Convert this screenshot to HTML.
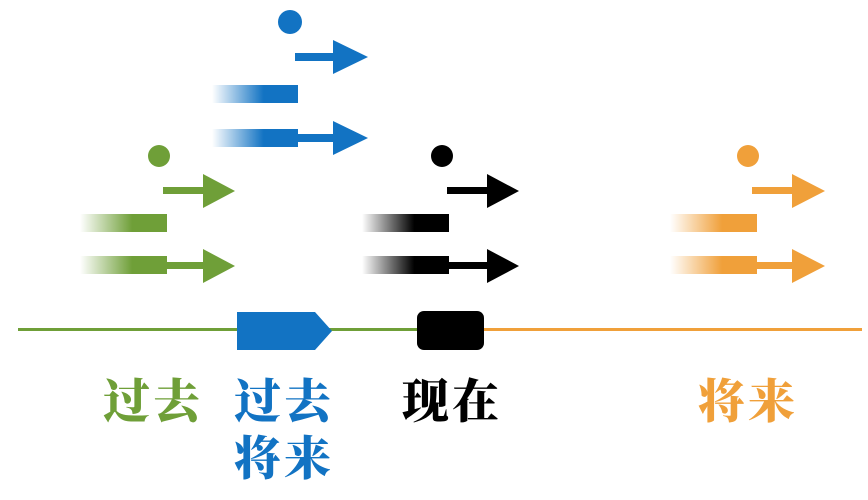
<!DOCTYPE html>
<html><head><meta charset="utf-8"><style>
html,body{margin:0;padding:0;background:#fff;width:868px;height:500px;overflow:hidden;position:relative}
.t{position:absolute;font-family:"Liberation Serif","Noto Serif CJK SC",serif;font-weight:900;font-size:47px;line-height:50px;letter-spacing:3px;white-space:nowrap}
</style></head><body>
<svg width="868" height="500" style="position:absolute;left:0;top:0">
<defs>
<linearGradient id="gb" x1="0" x2="1"><stop offset="0" stop-color="#1273c3" stop-opacity="0"/><stop offset="0.6" stop-color="#1273c3"/></linearGradient>
<linearGradient id="gg" x1="0" x2="1"><stop offset="0" stop-color="#6f9f38" stop-opacity="0"/><stop offset="0.6" stop-color="#6f9f38"/></linearGradient>
<linearGradient id="gk" x1="0" x2="1"><stop offset="0" stop-color="#000" stop-opacity="0"/><stop offset="0.6" stop-color="#000"/></linearGradient>
<linearGradient id="go" x1="0" x2="1"><stop offset="0" stop-color="#f0a03a" stop-opacity="0"/><stop offset="0.6" stop-color="#f0a03a"/></linearGradient>
</defs>
<g fill="#1273c3">
<circle cx="290" cy="22" r="12"/>
<rect x="295" y="53" width="40" height="8"/><polygon points="333,40 368,57 333,74"/>
<rect x="212" y="85" width="86" height="18" fill="url(#gb)"/>
<rect x="212" y="129" width="86" height="18" fill="url(#gb)"/>
<rect x="296" y="134" width="39" height="8"/><polygon points="333,121 368,138 333,155"/>
</g>
<g fill="#6f9f38">
<circle cx="159" cy="156" r="11"/>
<rect x="163" y="187" width="42" height="7"/><polygon points="203,174 235,191 203,208"/>
<rect x="80" y="214" width="87" height="18" fill="url(#gg)"/>
<rect x="80" y="256" width="87" height="18" fill="url(#gg)"/>
<rect x="165" y="262" width="40" height="7"/><polygon points="203,249 235,266 203,283"/>
</g>
<g fill="#000">
<circle cx="442" cy="156" r="11"/>
<rect x="447" y="187" width="42" height="7"/><polygon points="487,174 519,191 487,208"/>
<rect x="362" y="214" width="87" height="18" fill="url(#gk)"/>
<rect x="362" y="256" width="87" height="18" fill="url(#gk)"/>
<rect x="447" y="262" width="42" height="7"/><polygon points="487,249 519,266 487,283"/>
</g>
<g fill="#f0a03a">
<circle cx="748" cy="156" r="11"/>
<rect x="752" y="187" width="42" height="7"/><polygon points="792,174 825,191 792,208"/>
<rect x="670" y="214" width="87" height="18" fill="url(#go)"/>
<rect x="670" y="256" width="87" height="18" fill="url(#go)"/>
<rect x="755" y="262" width="39" height="7"/><polygon points="792,249 825,266 792,283"/>
</g>
<rect x="18" y="328" width="402" height="3" fill="#6f9f38"/>
<rect x="480" y="328" width="382" height="3" fill="#f0a03a"/>
<polygon points="237,312 315,312 332,331 315,350 237,350" fill="#1273c3"/>
<rect x="417" y="311" width="67" height="39" rx="7" fill="#000"/>
</svg>
<div class="t" style="left:103px;top:378px;color:#6f9f38">过去</div>
<div class="t" style="left:234px;top:378px;color:#1273c3">过去</div>
<div class="t" style="left:234px;top:435px;color:#1273c3">将来</div>
<div class="t" style="left:402px;top:378px;color:#000">现在</div>
<div class="t" style="left:698px;top:378px;color:#f0a03a">将来</div>
</body></html>
